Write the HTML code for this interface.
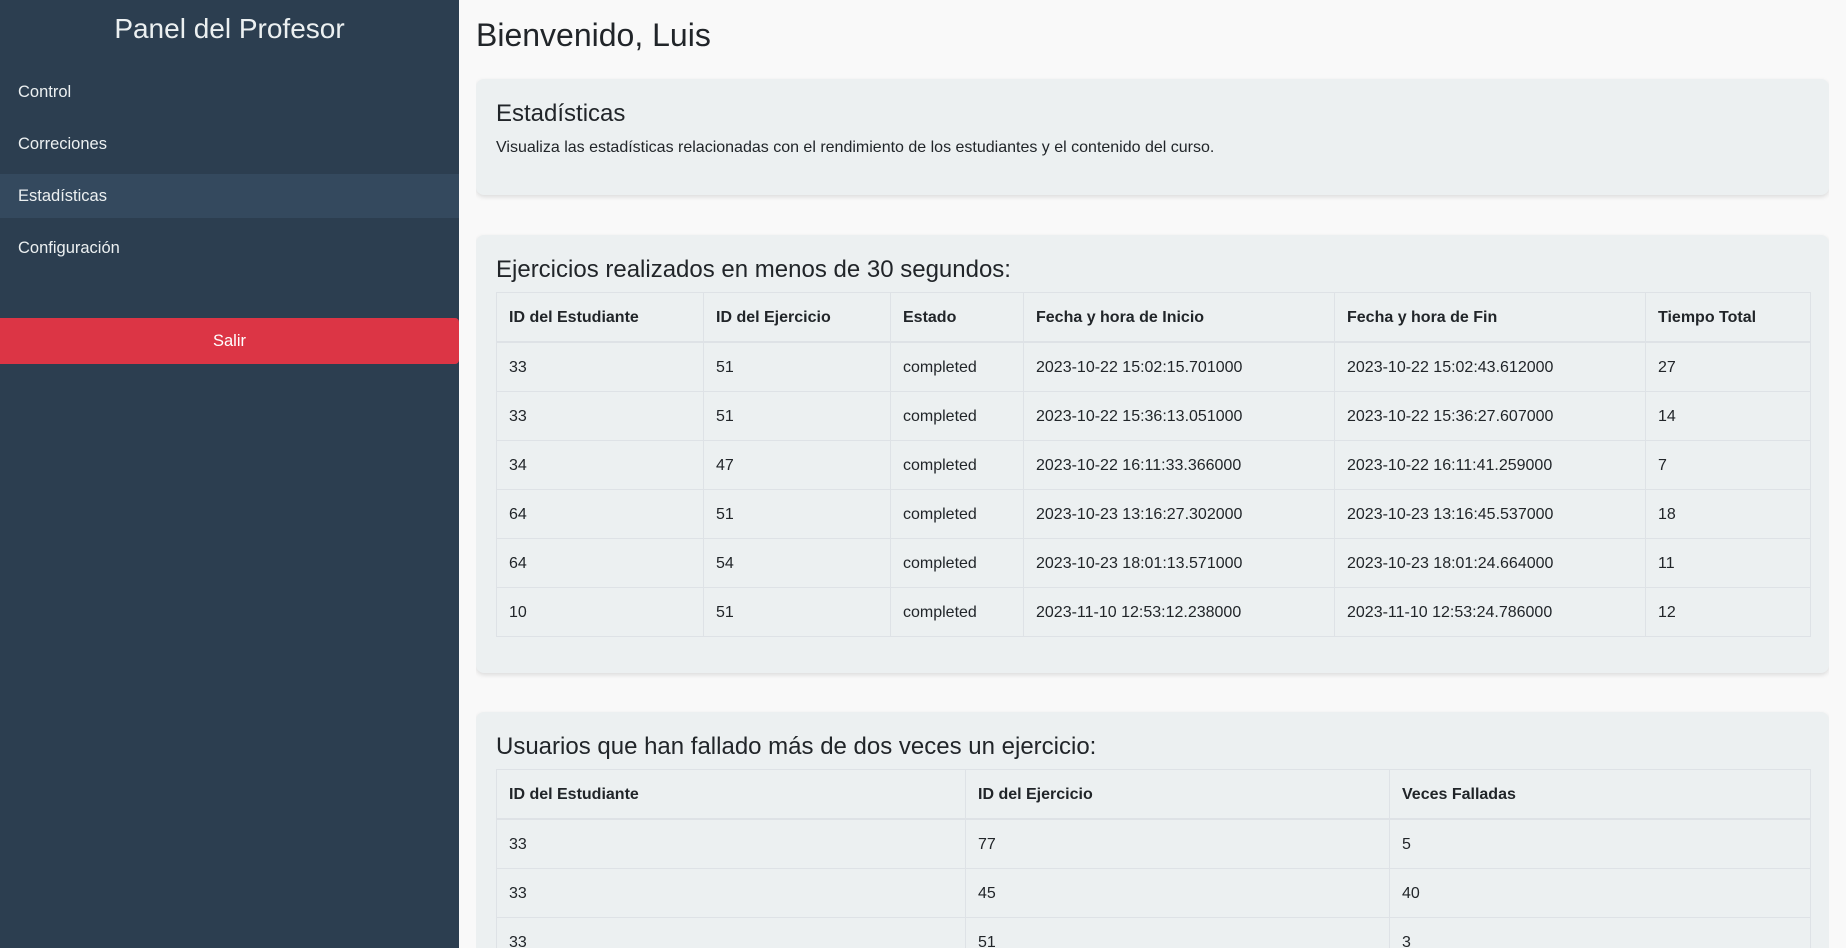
<!DOCTYPE html>
<html style="width:1846px;height:948px;overflow:hidden"><head><meta charset="utf-8"><style>
*{box-sizing:border-box}
body{margin:0;width:1846px;height:948px;overflow:hidden;position:relative;background:#f9f9f9;font-family:"Liberation Sans",sans-serif;color:#212529}
.side{position:absolute;left:0;top:0;width:459px;height:948px;background:#2c3e50;color:#ecf0f1}
.side h2{margin:0;position:absolute;top:12px;width:100%;text-align:center;font-weight:normal;font-size:28px;line-height:34px}
.nav{position:absolute;top:70px;left:0;width:100%}
.nav div{height:44px;line-height:44px;padding-left:18px;font-size:16.5px;margin-bottom:8px}
.nav .act{background:#34495e}
.salir{position:absolute;top:318px;left:0;width:459px;height:46px;line-height:46px;background:#dc3545;color:#fff;text-align:center;font-size:16.5px;border-radius:0 4px 4px 0}
.main{position:absolute;left:476px;top:0;width:1353px;height:948px;overflow:hidden}
h1{margin:0;position:absolute;top:16px;font-weight:normal;font-size:32px;line-height:38px}
.card{position:absolute;left:0;width:1353px;background:#ecf0f1;border-radius:8px;box-shadow:0 2px 5px rgba(0,0,0,.12);padding:20px;overflow:hidden}
.card h3{margin:0 0 8px;font-weight:normal;font-size:24px;line-height:29px}
.card p{margin:0;font-size:16px;line-height:24px}
table{border-collapse:collapse;width:1314px;font-size:16px;table-layout:fixed}
td,th{border:1px solid #dee2e6;padding:13px 12px 11px;line-height:24px;text-align:left;height:49px}
th{border-bottom:2px solid #dee2e6;font-weight:bold}
</style></head><body>
<div class="side">
<h2>Panel del Profesor</h2>
<div class="nav"><div>Control</div><div>Correciones</div><div class="act">Estadísticas</div><div>Configuración</div></div>
<div class="salir">Salir</div>
</div>
<div class="main">
<h1>Bienvenido, Luis</h1>
<div class="card" style="top:79px;height:116px"><h3>Estadísticas</h3><p>Visualiza las estadísticas relacionadas con el rendimiento de los estudiantes y el contenido del curso.</p></div>
<div class="card" style="top:235px;height:438px"><h3>Ejercicios realizados en menos de 30 segundos:</h3>
<table><colgroup><col style="width:207px"><col style="width:187px"><col style="width:133px"><col style="width:311px"><col style="width:311px"><col style="width:165px"></colgroup>
<tr><th>ID del Estudiante</th><th>ID del Ejercicio</th><th>Estado</th><th>Fecha y hora de Inicio</th><th>Fecha y hora de Fin</th><th>Tiempo Total</th></tr>
<tr><td>33</td><td>51</td><td>completed</td><td>2023-10-22 15:02:15.701000</td><td>2023-10-22 15:02:43.612000</td><td>27</td></tr>
<tr><td>33</td><td>51</td><td>completed</td><td>2023-10-22 15:36:13.051000</td><td>2023-10-22 15:36:27.607000</td><td>14</td></tr>
<tr><td>34</td><td>47</td><td>completed</td><td>2023-10-22 16:11:33.366000</td><td>2023-10-22 16:11:41.259000</td><td>7</td></tr>
<tr><td>64</td><td>51</td><td>completed</td><td>2023-10-23 13:16:27.302000</td><td>2023-10-23 13:16:45.537000</td><td>18</td></tr>
<tr><td>64</td><td>54</td><td>completed</td><td>2023-10-23 18:01:13.571000</td><td>2023-10-23 18:01:24.664000</td><td>11</td></tr>
<tr><td>10</td><td>51</td><td>completed</td><td>2023-11-10 12:53:12.238000</td><td>2023-11-10 12:53:24.786000</td><td>12</td></tr>
</table></div>
<div class="card" style="top:712px;height:236px;border-radius:8px 8px 0 0"><h3>Usuarios que han fallado más de dos veces un ejercicio:</h3>
<table><colgroup><col style="width:469px"><col style="width:424px"><col style="width:421px"></colgroup>
<tr><th>ID del Estudiante</th><th>ID del Ejercicio</th><th>Veces Falladas</th></tr>
<tr><td>33</td><td>77</td><td>5</td></tr>
<tr><td>33</td><td>45</td><td>40</td></tr>
<tr><td>33</td><td>51</td><td>3</td></tr>
</table></div>
</div>
</body></html>
